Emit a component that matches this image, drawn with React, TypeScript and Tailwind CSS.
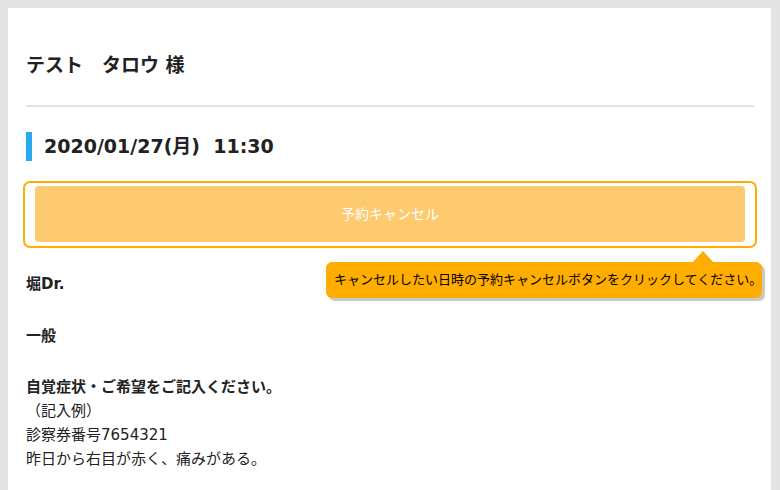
const font = {
  fontFamily: '"DejaVu Sans", "Noto Sans CJK JP", sans-serif',
};

const App = () => {
  return (
    <div
      className="w-[780px] h-[490px] overflow-hidden bg-[#e4e4e4] pt-2 pl-2 pr-[9px]"
      style={font}
    >
      <div className="bg-white h-[500px] pl-[18px] pr-[17px] pt-[44px] text-[#222]">
        <h1 className="text-[19px] leading-[27px] font-bold">
          テスト　タロウ 様
        </h1>
        <div className="mt-[26px] h-[2px] bg-[#e2e2e2]" />

        <div className="mt-[25px] flex items-center">
          <div className="w-[6px] h-[29px] bg-[#29a9ef]" />
          <h2 className="ml-3 text-[19px] leading-[29px] font-bold">
            2020/01/27(月)&nbsp; 11:30
          </h2>
        </div>

        <div className="relative mt-5 -mx-[3px] border-2 border-[#ffad00] rounded-[7px] px-[10px] pt-[3px] pb-1">
          <button
            type="button"
            className="w-full h-[56px] rounded-[4px] bg-[#fdca6f] text-white text-[14px]"
          >
            予約キャンセル
          </button>

          <div className="absolute left-[301px] top-[79px] w-[436px] h-[36px] rounded-[6px] bg-[#ffad00] shadow-[3px_3px_1px_rgba(0,0,0,0.22)] flex items-center pl-2 text-[13px] text-black whitespace-nowrap">
            キャンセルしたい日時の予約キャンセルボタンをクリックしてください。
            <svg
              className="absolute -top-[11px] left-[366px]"
              width="22"
              height="12"
              viewBox="0 0 22 12"
            >
              <path d="M0 12 L11 0 L22 12 Z" fill="#ffad00" />
            </svg>
          </div>
        </div>

        <div className="text-[15px] leading-[24px]">
          <p className="mt-6 font-bold">堀Dr.</p>
          <p className="mt-7 font-bold">一般</p>
          <p className="mt-[27px] font-bold">自覚症状・ご希望をご記入ください。</p>
          <p>（記入例）</p>
          <p>診察券番号7654321</p>
          <p>昨日から右目が赤く、痛みがある。</p>
        </div>
      </div>
    </div>
  );
};

export default App;
